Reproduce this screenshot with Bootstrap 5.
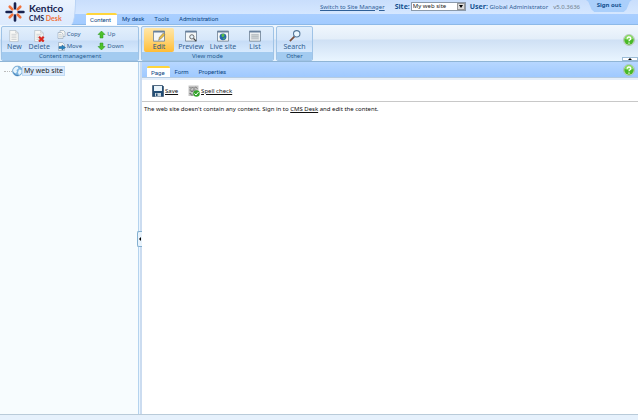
<!DOCTYPE html>
<html lang="en">
<head>
<meta charset="utf-8">
<meta name="viewport" content="width=device-width, initial-scale=1">
<title>Kentico CMS Desk</title>
<link href="https://cdn.jsdelivr.net/npm/bootstrap@5.3.0/dist/css/bootstrap.min.css" rel="stylesheet">
<style>
body{font:6px/10px "Noto Sans","Open Sans",sans-serif;color:#222;background:#fff}
a{color:inherit}
button{font:inherit;color:inherit;padding:0;border:0;background:none}
.masthead{height:25px;background:linear-gradient(#c9defc 0,#d5e7ff 14px,#aacfff 14px,#a2cbff 24px,#8db9e8 24px)}
.brand{width:76px;background:linear-gradient(#eaf3fe,#dceafd);border-right:1px solid #b9d3f5;border-radius:0 0 5px 0/0 0 25px 0}
.brand svg{width:20px;height:20px;margin:2px 4px 0 5px}
.brand-name{font:bold 10px/11px Lato,sans-serif;color:#17224f;padding-top:3px}
.brand-sub{font:bold 7px/8px Lato,sans-serif;color:#17224f}
.brand-sub span{color:#f0713a}
.user-line{height:14px;color:#2f6098;padding-right:6px}
.user-line b{color:#12508f;font-size:7px}
.user-line>.version{color:#6f7d8c;margin:0 6px 0 5px}
.manager-link{margin-right:10px}
.site-field{margin:0 4px 0 1px}
.site-select{font:6px/7px "Noto Sans",sans-serif;color:#222;width:55px;height:9px;padding:0 0 0 1px;border:1px solid #8b9aab;border-radius:0;background:#fff;appearance:none;display:block}
.drop-mark{position:absolute;right:1px;top:1px;width:8px;height:7px;background:#dcdcdc;border:1px solid #999;pointer-events:none}
.drop-mark svg{display:block;width:6px;height:5px}
.signout{width:46px;height:12px;background:#aacffb;clip-path:polygon(0 0,100% 0,95% 15%,88% 80%,82% 100%,18% 100%,12% 80%,5% 15%);font-weight:bold;text-decoration:none;text-align:center;line-height:11px;color:#12508f}
.main-tabs{padding-left:10px}
.tab-link{font:6px/12px Roboto,sans-serif;color:#0a4482;text-decoration:none;padding:0 5px}
.tab-link.active{background:#fff;border-top:2px solid #ffd53c;border-radius:2px 2px 0 0;line-height:9px;padding:0 5px 0 4px}
.main-tabs .active{padding-right:6px}
.ribbon{height:37px;background:linear-gradient(#f1f7fd,#e3eef9 14px,#cfe0f4 15px,#e9f5ff 36px);border-bottom:1px solid #8fb5d6;padding:1px 0 0 1px;gap:2px;color:#315f91}
.group-box{height:35px;border:1px solid #9fc3e6;border-radius:2px;background:linear-gradient(#e2effc,#d5e6fa 13px,#c6dcf6 14px,#daecff 27px);overflow:hidden}
.group-content{width:138px}
.group-view{width:133px}
.group-other{width:37px}
.group-title{height:8px;line-height:9px;background:#a3cbf0;text-align:center;color:#255b91}
.big-btn{font-size:7px;line-height:10px;width:32px;height:24px;margin-top:1px;padding-top:2px;text-align:center;white-space:nowrap}
.big-btn svg{display:block;width:14px;height:12px;margin:0 auto}
.big-btn.slim{width:25px}
.big-btn.active{background:linear-gradient(#ffe6a8,#ffd475 50%,#ffbd36);border-radius:2px;color:#234f80;width:30px}
.big-btn.active+.big-btn{margin-left:1px}
.small-stack{padding-top:1px;margin-left:5px;width:41px}
.small-btn{height:12px;line-height:12px;display:flex;align-items:center;text-align:left;gap:1px}
.small-btn svg{width:9px;height:9px}
.group-view .big-btn:first-child{margin-left:2px}
.help-btn{width:12px;height:12px}
.help-btn svg{display:block;width:12px;height:12px}
.ribbon>.help-btn{margin:8px 3px 0 auto}
.ribbon-toggle{position:absolute;right:0;bottom:0;width:16px;height:4px;border:1px solid #9abbd5;background:#fff}
.ribbon-toggle svg,.split-handle svg{display:block;width:100%;height:100%}
.tree-pane{width:138px;background:#f7fcfe;padding:3px 0 0 4px}
.tree-dots{width:8px;border-top:1px dotted #bbb}
.tree-item svg{width:11px;height:12px}
.tree-link{color:#222;text-decoration:none;background:#dbeafc;border:1px solid #c0dbf5;line-height:8px;padding:0 1px;font-size:7px;margin-left:-1px}
.split-bar{width:4px;background:linear-gradient(90deg,#b5d3ee 1px,#eaf5ff 1px,#eaf5ff 2px,#cbdcf0 2px)}
.split-handle{position:absolute;left:-1px;top:48%;width:5px;height:16px;border:1px solid #84b0d0;border-right:0;border-radius:2px 0 0 2px;background:#e8f3fc}
.page-tabs{height:15px;background:linear-gradient(#b7d7ff,#9fc9ff);padding:4px 3px 0 5px}
.page-tabs .tab-link{flex-shrink:0}
.page-tabs .help-btn{margin-top:-2px}
.edit-bar{height:25px;border-top:1px solid #b4cbe2;border-bottom:1px solid #c8c8c8;padding:2px 0 0 10px;gap:10px;box-shadow:inset 0 2px #e6effa}
.edit-bar a{gap:1px;line-height:8px}
.edit-bar svg{width:12px;height:12px}
.edit-bar span{text-decoration:underline}
.message{padding:2px 2px}
.content-text{color:#111}
.status{height:6px;background:#e6f1fc;border-top:1px solid #b9cbd9}
</style>
<script src="https://cdn.jsdelivr.net/npm/bootstrap@5.3.0/dist/js/bootstrap.bundle.min.js"></script>
</head>
<body class="vh-100 d-flex flex-column overflow-hidden">
<svg class="d-none">
<symbol id="help" viewBox="0 0 24 24"><circle cx="12" cy="12" r="11" fill="#d6e8cf" stroke="#8fa58b"/><circle cx="12" cy="12" r="9.500" fill="#49b928"/><path d="M4 10a8 8 0 0116 0q-8 4-16 0" fill="#8bdc66"/><path d="M8.500 9.500q0-3.500 3.500-3.500t3.500 3q0 2-2 3-1.500 1-1.500 2.500M12 17v2.500" fill="none" stroke="#fff" stroke-width="2.600"/></symbol>
<symbol id="doc" viewBox="0 0 28 28"><path d="M4 1h14l6 6v20H4z" fill="#f8f8f5" stroke="#abb6c0" stroke-width="1.500"/><path d="M18 1v6h6M8 10h12M8 14h12M8 18h12M8 22h12" fill="none" stroke="#b9bec2" stroke-width="1.500"/></symbol>
<symbol id="win" viewBox="0 0 28 28"><path d="M1 3h26v23H1z" fill="#f5f7f7" stroke="#6c7f92" stroke-width="2"/><path d="M1 2h26v4H1z" fill="#667f9c"/></symbol>
</svg>
<header class="masthead d-flex flex-shrink-0">
 <div class="brand d-flex flex-shrink-0">
  <svg viewBox="-19 -19 38 38"><g stroke-width="5" stroke-linecap="round"><g stroke="#17224f"><path d="M-7 0H-16M7 0H16M0-7V-16M0 7V16"/></g><g stroke="#f0713a"><path d="M-5-5-10-10M5-5 10-10M-5 5-10 10M5 5 10 10"/></g></g></svg>
  <div><div class="brand-name">Kentico</div><div class="brand-sub">CMS <span>Desk</span></div></div>
 </div>
 <div class="flex-grow-1 d-flex flex-column">
  <div class="user-line d-flex justify-content-end align-items-center">
   <a href="#" class="manager-link">Switch to Site Manager</a>
   <label for="site"><b>Site:</b></label>
   <div class="site-field position-relative"><select id="site" class="site-select"><option>My web site</option></select><span class="drop-mark"><svg viewBox="0 0 6 5"><path d="M1 1h4L3 4z"/></svg></span></div>
   <span><b>User:</b> Global Administrator</span><span class="version">v5.0.3636</span>
   <a href="#" class="signout align-self-start">Sign out</a>
  </div>
  <nav class="main-tabs d-flex"><a href="#" class="tab-link active">Content</a><a href="#" class="tab-link">My desk</a><a href="#" class="tab-link">Tools</a><a href="#" class="tab-link">Administration</a></nav>
 </div>
</header>
<section class="ribbon d-flex flex-shrink-0 position-relative">
 <div class="group-box group-content d-flex flex-column"><div class="d-flex flex-grow-1">
  <button class="big-btn slim"><svg viewBox="0 0 28 28"><use href="#doc"/></svg>New</button>
  <button class="big-btn slim"><svg viewBox="0 0 28 28"><use href="#doc"/><path d="M14 16l11 11M25 16L14 27" stroke="#d92a22" stroke-width="5"/></svg>Delete</button>
  <div class="small-stack">
   <button class="small-btn"><svg viewBox="0 0 18 18"><path d="M6 1h7l3 3v9H6z" fill="#f5f5f2" stroke="#8195a8"/><path d="M2 5h7l3 3v9H2z" fill="#f8f8f5" stroke="#8195a8"/><path d="M4 9h5M4 12h6M4 14h6" stroke="#aab4bd"/></svg>Copy</button>
   <button class="small-btn"><svg viewBox="0 0 18 18"><path d="M3 1h8l4 4v12H3z" fill="#f5f5f2" stroke="#8195a8"/><path d="M4 9h6V6l7 5-7 5v-3H4z" fill="#2883bd" stroke="#1d5c93"/></svg>Move</button>
  </div>
  <div class="small-stack ms-0">
   <button class="small-btn"><svg viewBox="0 0 18 18"><path d="M9 2l7 7h-4v7H6V9H2z" fill="#4ec22b" stroke="#279018"/></svg>Up</button>
   <button class="small-btn"><svg viewBox="0 0 18 18"><path d="M9 16l7-7h-4V2H6v7H2z" fill="#4ec22b" stroke="#279018"/></svg>Down</button>
  </div>
 </div><div class="group-title">Content management</div></div>
 <div class="group-box group-view d-flex flex-column"><div class="d-flex flex-grow-1">
  <button class="big-btn active"><svg viewBox="0 0 28 28"><use href="#win"/><path d="M13 24l2-7L24 7l4 4-10 10z" fill="#e8be42" stroke="#555"/></svg>Edit</button>
  <button class="big-btn"><svg viewBox="0 0 28 28"><use href="#win"/><circle cx="16" cy="16" r="5" fill="#e7f3fb" stroke="#555" stroke-width="2"/><path d="M20 20l6 6" stroke="#444" stroke-width="3"/></svg>Preview</button>
  <button class="big-btn"><svg viewBox="0 0 28 28"><use href="#win"/><circle cx="14" cy="16" r="8" fill="#2767ad"/><path d="M10 11q5-4 8 0l-2 5-4 1zM14 19l6-2-4 6z" fill="#58bd48"/></svg>Live site</button>
  <button class="big-btn"><svg viewBox="0 0 28 28"><use href="#win"/><path d="M4 9h20v14H4z" fill="#d3d7d9"/><path d="M6 11h16M6 15h16M6 19h16" stroke="#b3b9bd" stroke-width="2"/></svg>List</button>
 </div><div class="group-title">View mode</div></div>
 <div class="group-box group-other d-flex flex-column"><div class="d-flex flex-grow-1 justify-content-center">
  <button class="big-btn"><svg viewBox="0 0 28 28"><path d="M13 15L2 26" stroke="#7a4d3a" stroke-width="4"/><circle cx="18" cy="9" r="7.500" fill="#e9f6ff" stroke="#55799b" stroke-width="2.500"/></svg>Search</button>
 </div><div class="group-title">Other</div></div>
 <button class="help-btn" aria-label="Help"><svg><use href="#help"/></svg></button>
 <button class="ribbon-toggle" aria-label="Collapse ribbon"><svg viewBox="0 0 14 2"><path d="M7 0l2 2H5z"/></svg></button>
</section>
<main class="flex-grow-1 d-flex">
 <aside class="tree-pane flex-shrink-0"><div class="tree-item d-flex align-items-center"><span class="tree-dots"></span><svg viewBox="0 0 22 22"><circle cx="11" cy="11" r="10" fill="#7fb6e0" stroke="#5b90bd"/><path d="M3 7q3-5 8-5l2 4-4 3 1 4-4 3-4-5zM14 8l5 1v6l-5 4-2-5z" fill="#e8f5fd"/><path d="M3 15q4 6 10 5" fill="none" stroke="#3d7cb4" stroke-width="2"/></svg><a class="tree-link" href="#">My web site</a></div></aside>
 <div class="split-bar position-relative flex-shrink-0"><button class="split-handle" aria-label="Collapse tree"><svg viewBox="0 0 4 14"><path d="M3 5v4L1 7z"/></svg></button></div>
 <section class="content-text flex-grow-1">
  <nav class="page-tabs d-flex align-items-start"><a href="#" class="tab-link active">Page</a><a href="#" class="tab-link">Form</a><a href="#" class="tab-link">Properties</a><button class="help-btn ms-auto" aria-label="Help"><svg><use href="#help"/></svg></button></nav>
  <div class="edit-bar d-flex align-items-center">
   <a href="#" class="d-flex align-items-center text-decoration-none"><svg viewBox="0 0 24 24"><path d="M1 1h20l2 2v20H1z" fill="#244e75" stroke="#16314c"/><path d="M4 2h16v10H4z" fill="#eaf4fa"/><path d="M6 16h12v7H6z" fill="#cbd8e0"/><path d="M8 17h3v5H8z" fill="#244e75"/></svg><span>Save</span></a>
   <a href="#" class="d-flex align-items-center text-decoration-none"><svg viewBox="0 0 24 24"><path d="M1 1h20v21H1z" fill="#c4c4c4"/><path d="M3 4l3 3 3-3 3 3 3-3 4 3M3 10h3v3h4v-3h5M3 17h3v3h4" fill="none" stroke="#777" stroke-width="2"/><circle cx="17" cy="17" r="6.500" fill="#35a52c"/><path d="M13 17l3 3 5-6" fill="none" stroke="#fff" stroke-width="2"/></svg><span>Spell check</span></a>
  </div>
  <p class="message m-0">The web site doesn't contain any content. Sign in to <a href="#">CMS Desk</a> and edit the content.</p>
 </section>
</main>
<footer class="status flex-shrink-0"></footer>
</body>
</html>
